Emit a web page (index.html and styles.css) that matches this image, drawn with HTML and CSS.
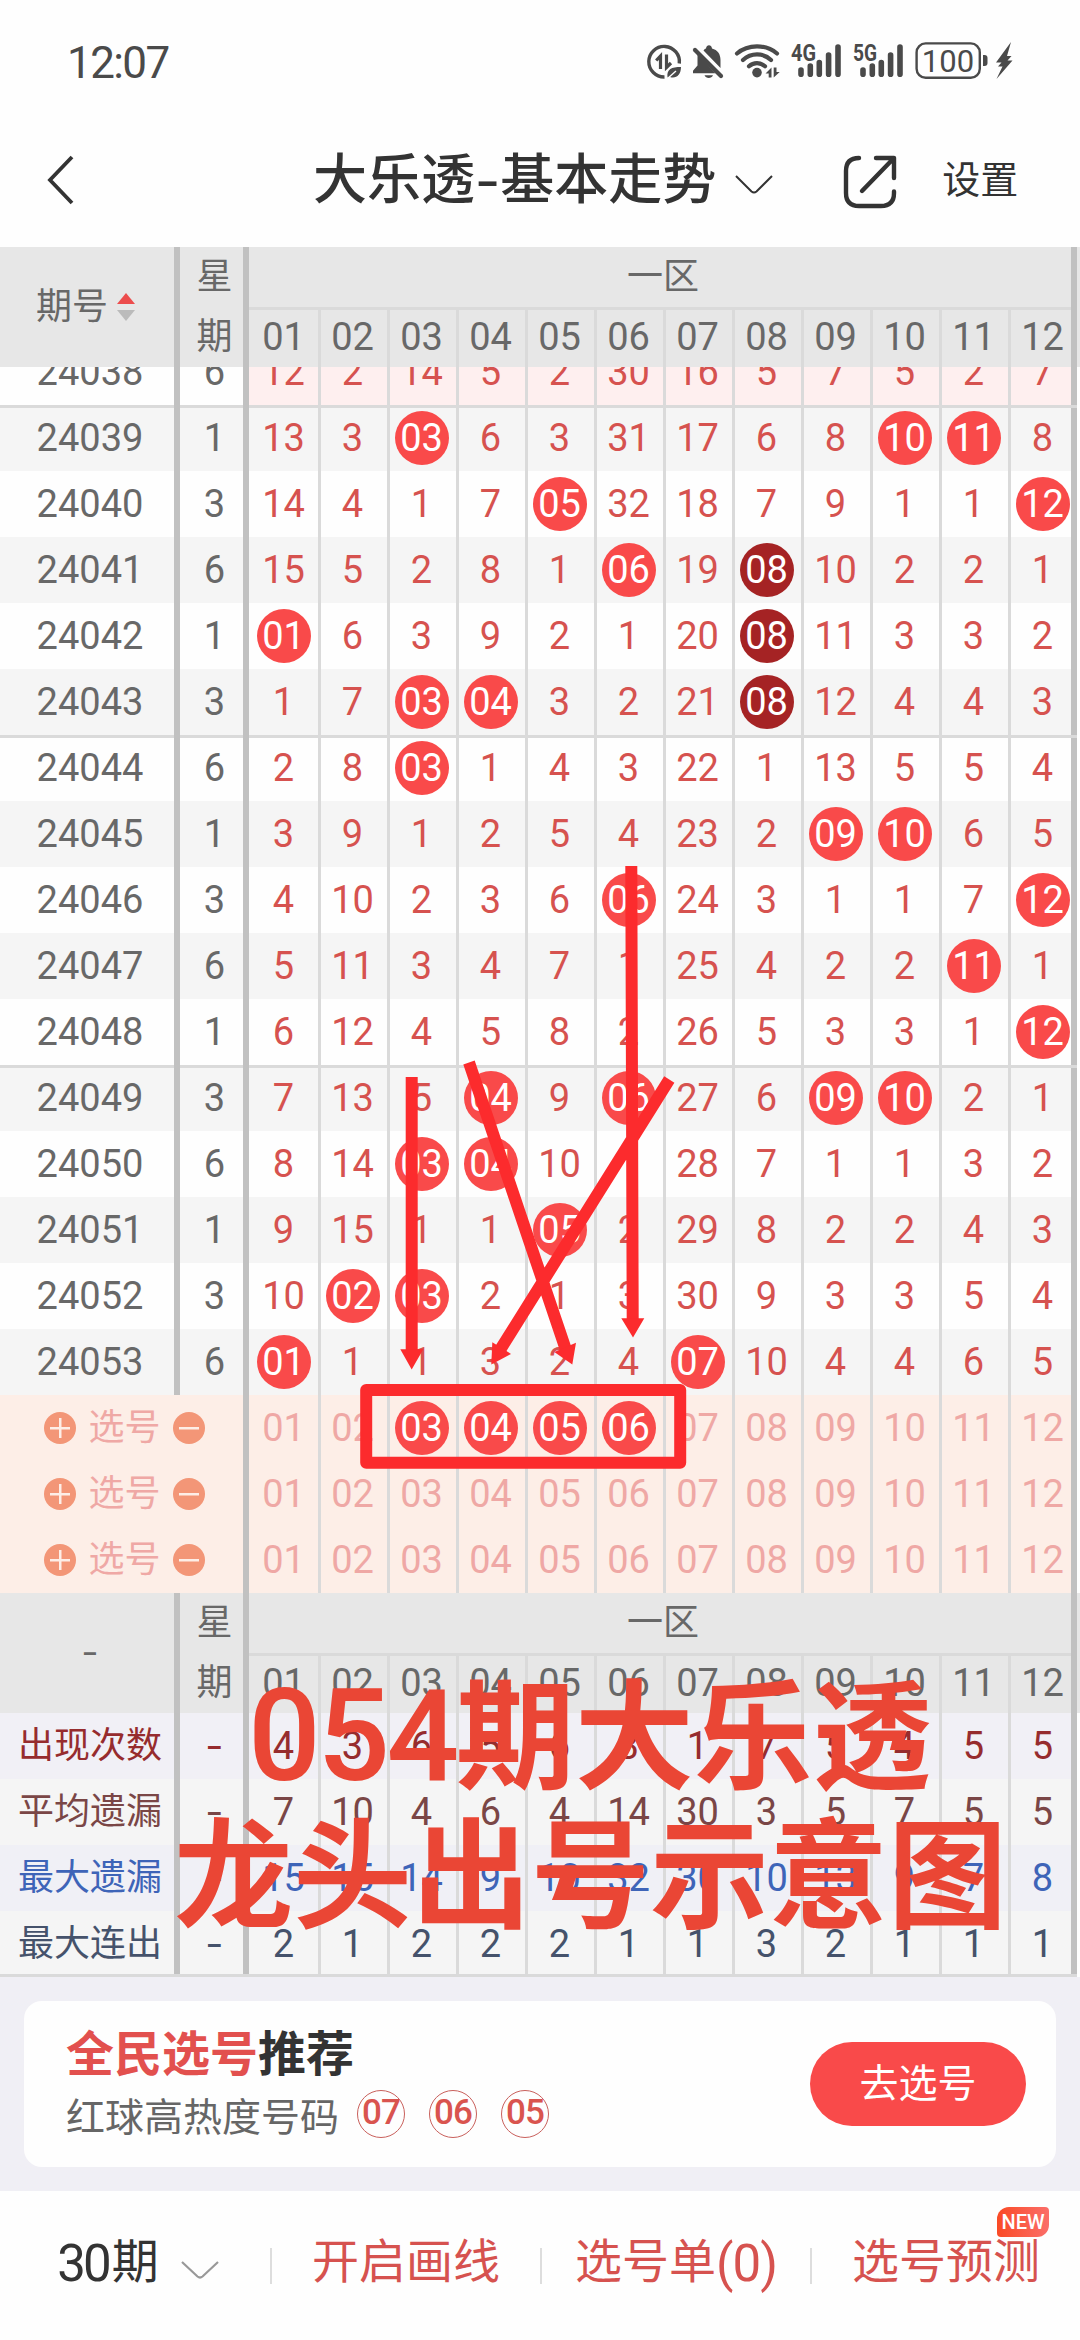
FILE: index.html
```html
<!DOCTYPE html>
<html lang="zh-CN">
<head>
<meta charset="utf-8">
<title>大乐透-基本走势</title>
<link rel="stylesheet" href="styles.css">
</head>
<body>
<header class="status">
  <span class="clock">12:07</span>
  <svg class="status-icons" width="370" height="44" viewBox="645 40 370 44">
    <g fill="none" stroke="#4a4a4a" stroke-width="3.4">
      <path d="M679.300 63.500a15.300 15.300 0 1 0-14.800 13.500"/>
      <path d="M656.200 60.500l4.300-4.500v13M666.500 54.500v13l4.500-4.500" stroke-width="3.200"/>
    </g>
    <path d="M667.500 77.500c-1-8.500 4-10.500 13.500-10.500c0 8-5 12-11 10z" fill="#4a4a4a"/>
    <path d="M667.500 78.500l8.500-7.500" stroke="#fefefe" stroke-width="1.400"/>
    <g fill="#4a4a4a">
      <path d="M697.500 54l18 19.300h-22.500v-2.600l4.500-5.200zM703.500 50.500c1-1.300 1.500-1.700 2.500-2c.5-4.400 5.500-4.400 6 0c5.500 1.500 8.500 5.500 8.500 11.500v8zM704.500 75.300h8.500c-1.500 3.500-7 3.500-8.500 0z"/>
      <path d="M695 50l26 26" stroke="#4a4a4a" stroke-width="4.200" stroke-linecap="round"/>
      <circle cx="757" cy="72.600" r="4.800"/>
      <path d="M771.500 67.500v10h-2.800v-4h-3.200zM773.700 77.500v-10h2.800v4.500h3.200z"/>
    </g>
    <g fill="none" stroke="#4a4a4a" stroke-width="4.200" stroke-linecap="round">
      <path d="M737 53.500c11-9.500 29-9.500 40 0M743 60c8-7.500 20-7.500 28 0M749 66.300c4.500-4.200 11.500-4.200 16 0"/>
    </g>
    <g stroke="#4a4a4a" stroke-width="5.600" stroke-linecap="round">
      <path d="M801 70v4.300M810.300 66v8.300M819.300 62.500v11.800M828.600 55v19.300M838 47v27.300"/>
      <path d="M863 70v4.300M872.300 66v8.300M881.300 62.500v11.800M890.600 55v19.300M900 47v27.300"/>
    </g>
    <g class="net"><text x="791" y="60.500" textLength="25" lengthAdjust="spacingAndGlyphs">4G</text><text x="853" y="60.500" textLength="24" lengthAdjust="spacingAndGlyphs">5G</text></g>
    <rect x="916.600" y="43.400" width="63.200" height="34.400" rx="9" fill="none" stroke="#4a4a4a" stroke-width="2.400"/>
    <text class="batt" x="948" y="72" text-anchor="middle">100</text>
    <path d="M983 55h1.500q3 0 3 3v5q0 3-3 3h-1.500z" fill="#4a4a4a"/>
    <path d="M1011 42l-15 20.500h5.500l-3.500 4h4.500l-6 12.500l16-18.500h-5l4-4.500h-4.500z" fill="#4a4a4a"/>
  </svg>
</header>

<nav class="titlebar">
  <svg class="back" width="30" height="52" viewBox="0 0 30 52"><path d="M27 3L5 26l22 23" fill="none" stroke="#333" stroke-width="3.800"/></svg>
  <h1>大乐透<span class="dash">-</span>基本走势</h1>
  <svg class="down" width="40" height="22" viewBox="0 0 40 22"><path d="M2 2l15.500 15.500q2.500 2 5 0L38 2" fill="none" stroke="#333" stroke-width="2"/></svg>
  <svg class="share" width="56" height="56" viewBox="0 0 56 56"><path d="M17 4q-13 0-13 13v22q0 13 13 13h22q13 0 13-13v-1.500M34 4h18v20M52 4L20 37" fill="none" stroke="#333" stroke-width="4.400" stroke-linecap="round" stroke-linejoin="round"/></svg>
  <span class="settings">设置</span>
</nav>

<main class="chart">
<table class="grid head">
<colgroup><col class="c-issue"><col class="c-day" span="13"><col></colgroup>
<tr><td rowspan="2"><span class="sort">期号<svg width="18" height="28" viewBox="0 0 18 28"><path d="M9 0l9 11H0z" fill="#ec4d4d"/><path d="M0 17h18l-9 11z" fill="#bbb"/></svg></span><td>星<td class="zone" colspan="12">一区
<tr><td>期<td>01<td>02<td>03<td>04<td>05<td>06<td>07<td>08<td>09<td>10<td>11<td>12
</table>

<div class="scroll">
<table class="grid data">
<colgroup><col class="c-issue"><col class="c-day" span="13"><col></colgroup>
<tr class="pink"><td>24038<td>6<td>12<td>2<td>14<td>5<td>2<td>30<td>16<td>5<td>7<td>5<td>2<td>7
<tr class="sep alt"><td>24039<td>1<td>13<td>3<td><b>03</b><td>6<td>3<td>31<td>17<td>6<td>8<td><b>10</b><td><b>11</b><td>8
<tr><td>24040<td>3<td>14<td>4<td>1<td>7<td><b>05</b><td>32<td>18<td>7<td>9<td>1<td>1<td><b>12</b>
<tr class="alt"><td>24041<td>6<td>15<td>5<td>2<td>8<td>1<td><b>06</b><td>19<td><b class="hot">08</b><td>10<td>2<td>2<td>1
<tr><td>24042<td>1<td><b>01</b><td>6<td>3<td>9<td>2<td>1<td>20<td><b class="hot">08</b><td>11<td>3<td>3<td>2
<tr class="alt"><td>24043<td>3<td>1<td>7<td><b>03</b><td><b>04</b><td>3<td>2<td>21<td><b class="hot">08</b><td>12<td>4<td>4<td>3
<tr class="sep"><td>24044<td>6<td>2<td>8<td><b>03</b><td>1<td>4<td>3<td>22<td>1<td>13<td>5<td>5<td>4
<tr class="alt"><td>24045<td>1<td>3<td>9<td>1<td>2<td>5<td>4<td>23<td>2<td><b>09</b><td><b>10</b><td>6<td>5
<tr><td>24046<td>3<td>4<td>10<td>2<td>3<td>6<td><b>06</b><td>24<td>3<td>1<td>1<td>7<td><b>12</b>
<tr class="alt"><td>24047<td>6<td>5<td>11<td>3<td>4<td>7<td>1<td>25<td>4<td>2<td>2<td><b>11</b><td>1
<tr><td>24048<td>1<td>6<td>12<td>4<td>5<td>8<td>2<td>26<td>5<td>3<td>3<td>1<td><b>12</b>
<tr class="sep alt"><td>24049<td>3<td>7<td>13<td>5<td><b>04</b><td>9<td><b>06</b><td>27<td>6<td><b>09</b><td><b>10</b><td>2<td>1
<tr><td>24050<td>6<td>8<td>14<td><b>03</b><td><b>04</b><td>10<td>1<td>28<td>7<td>1<td>1<td>3<td>2
<tr class="alt"><td>24051<td>1<td>9<td>15<td>1<td>1<td><b>05</b><td>2<td>29<td>8<td>2<td>2<td>4<td>3
<tr><td>24052<td>3<td>10<td><b>02</b><td><b>03</b><td>2<td>1<td>3<td>30<td>9<td>3<td>3<td>5<td>4
<tr class="alt"><td>24053<td>6<td><b>01</b><td>1<td>1<td>3<td>2<td>4<td><b>07</b><td>10<td>4<td>4<td>6<td>5
</table>

<table class="grid pick">
<colgroup><col class="c-issue"><col class="c-day" span="13"><col></colgroup>
<tr><td colspan="2"><span class="picker"><i class="plus"></i>选号<i></i></span><td>01<td>02<td><b>03</b><td><b>04</b><td><b>05</b><td><b>06</b><td>07<td>08<td>09<td>10<td>11<td>12
<tr><td colspan="2"><span class="picker"><i class="plus"></i>选号<i></i></span><td>01<td>02<td>03<td>04<td>05<td>06<td>07<td>08<td>09<td>10<td>11<td>12
<tr><td colspan="2"><span class="picker"><i class="plus"></i>选号<i></i></span><td>01<td>02<td>03<td>04<td>05<td>06<td>07<td>08<td>09<td>10<td>11<td>12
</table>
</div>

<table class="grid head">
<colgroup><col class="c-issue"><col class="c-day" span="13"><col></colgroup>
<tr><td rowspan="2"><span class="none">-</span><td>星<td class="zone" colspan="12">一区
<tr><td>期<td>01<td>02<td>03<td>04<td>05<td>06<td>07<td>08<td>09<td>10<td>11<td>12
</table>

<table class="grid stats">
<colgroup><col class="c-issue"><col class="c-day" span="13"><col></colgroup>
<tr class="times"><td>出现次数<td><span class="none">-</span><td>4<td>3<td>6<td>5<td>6<td>3<td>1<td>7<td>5<td>4<td>5<td>5
<tr class="avg"><td>平均遗漏<td><span class="none">-</span><td>7<td>10<td>4<td>6<td>4<td>14<td>30<td>3<td>5<td>7<td>5<td>5
<tr class="max"><td>最大遗漏<td><span class="none">-</span><td>15<td>15<td>14<td>9<td>10<td>32<td>30<td>10<td>13<td>9<td>7<td>8
<tr class="run"><td>最大连出<td><span class="none">-</span><td>2<td>1<td>2<td>2<td>2<td>1<td>1<td>3<td>2<td>1<td>1<td>1
</table>

<svg class="marks" width="1080" height="1730" viewBox="0 247 1080 1730">
  <g fill="none" stroke="#fc2b2d" stroke-width="12">
    <path d="M411.700 1077V1352M469 1062.500L566 1350M669.300 1079.500L500 1350M631.300 866L632.700 1320"/>
    <rect x="366.200" y="1390" width="314" height="72.700" stroke-linejoin="round"/>
  </g>
  <path d="M400.300 1349.300h23L411.700 1369.500zM554.300 1352L576 1342.700L572.300 1364.500zM492.300 1342.300L511 1354L491.300 1364.500zM621.300 1318.300h23L633 1337.500z" fill="#fc2b2d"/>
</svg>
<div class="caption"><p><span class="num">054</span>期大乐透</p><p>龙头出号示意图</p></div>
</main>

<section class="promo">
  <div class="card">
    <div>
      <h2><em>全民选号</em>推荐</h2>
      <p>红球高热度号码<b>07</b><b>06</b><b>05</b></p>
    </div>
    <button>去选号</button>
  </div>
</section>

<footer class="tabs">
  <div class="period"><span class="num">30</span>期<svg width="40" height="20" viewBox="0 0 40 20"><path d="M2 2l15.500 14.500q2.500 2 5 0L38 2" fill="none" stroke="#999" stroke-width="2.200"/></svg></div>
  <div>开启画线</div>
  <div>选号单<span class="num">(0)</span></div>
  <div>选号预测<span class="new">NEW</span></div>
</footer>
</body>
</html>
```
FILE: styles.css
```css
* { box-sizing: border-box; margin: 0; padding: 0; }
body {
  width: 1080px;
  height: 2340px;
  overflow: hidden;
  background: #fefefe;
  color: #333;
  font-family: Roboto, "Noto Sans CJK SC", sans-serif;
}

/* status bar */
.status {
  height: 124px;
  padding: 0 65px 0 67px;
  display: flex;
  align-items: center;
  justify-content: space-between;
  color: #4a4a4a;
}
.clock { font-size: 44px; letter-spacing: -1.6px; line-height: 44px; padding-top: 2px; }
.net { font: 700 23px Roboto, sans-serif; fill: #4a4a4a; }
.batt { font: 400 31px Roboto, sans-serif; fill: #4a4a4a; }

/* title bar */
.titlebar {
  height: 123px;
  padding: 0 50px 12px 45px;
  display: flex;
  align-items: center;
}
.titlebar h1 {
  margin: -8px 0 0 238px;
  font: 500 54px/60px "Noto Sans CJK SC", sans-serif;
  white-space: nowrap;
}
.dash { display: inline-block; margin: 0 3px; transform: scaleX(1.25); }
.down { flex: none; margin: 10px 0 0 18px; }
.share { flex: none; margin: 4px 0 0 68px; }
.settings { margin-left: 44px; font-size: 38px; line-height: 60px; white-space: nowrap; }

/* trend tables */
.chart { position: relative; height: 1730px; }
.grid {
  width: 1080px;
  table-layout: fixed;
  border-collapse: collapse;
  font-size: 38px;
  line-height: 54px;
  color: #686868;
}
.c-issue { width: 180px; }
.c-day { width: 69px; }
.grid td {
  height: 66px;
  text-align: center;
  vertical-align: middle;
  white-space: nowrap;
  box-shadow: inset 3px 0 #dadada;
}
.grid td:first-child, .grid td:nth-child(2) { box-shadow: inset -6px 0 #c1c1c1; }
.grid td:nth-child(3) { box-shadow: none; }
.grid td:last-child { box-shadow: inset -6px 0 #c1c1c1, inset 3px 0 #dadada; }

.head, .head tr { background: #e7e7e7; }
.grid.head td { height: 60px; }
.head tr:first-child td { font-size: 36px; }
.head tr:nth-child(2) td { box-shadow: inset 0 3px #dadada, inset 3px 0 #dadada; }
.head tr:nth-child(2) td:first-child { box-shadow: inset -6px 0 #c1c1c1; font-size: 36px; }
.head tr:nth-child(2) td:nth-child(2) { box-shadow: inset 0 3px #dadada; }
.head tr:nth-child(2) td:last-child { box-shadow: inset -6px 0 #c1c1c1, inset 0 3px #dadada, inset 3px 0 #dadada; }
.head td.zone:last-child { box-shadow: inset -6px 0 #c1c1c1; }
.sort { display: flex; align-items: center; gap: 9px; padding-left: 36px; }
.none { display: inline-block; transform: scaleX(1.4); }

.scroll { height: 1226px; overflow: hidden; }
.data { margin-top: -28px; }
.data td { color: #d6524f; }
.data td:first-child, .data td:nth-child(2) { color: #686868; }
.data .alt { background: #f5f5f5; }
.pink td:nth-child(n+3) { background: #feefef; }
.data .sep td:first-child, .data .sep td:nth-child(2) { box-shadow: inset -6px 0 #c1c1c1, inset 0 3px #dadada; }
.data .sep td:nth-child(3) { box-shadow: inset 0 3px #dadada; }
.data .sep td:nth-child(n+4) { box-shadow: inset 0 3px #dadada, inset 3px 0 #dadada; }
.data .sep td:last-child { box-shadow: inset 0 3px #dadada, inset -6px 0 #c1c1c1, inset 3px 0 #dadada; }
.grid b {
  display: block;
  width: 54px;
  height: 54px;
  margin: 0 auto;
  border-radius: 50%;
  background: #f94a4a;
  color: #fff;
  font-weight: 400;
}
.grid b.hot { background: #a52324; }

.pick tr { background: #fdeee7; }
.pick td { color: #efa8a5; }
.grid.pick td:nth-child(2) { box-shadow: none; }
.grid.pick td:nth-child(3) { box-shadow: inset 3px 0 #dadada; }
.picker { display: flex; align-items: center; gap: 12.500px; padding-left: 44px; font-size: 36px; }
.picker i {
  width: 32px;
  height: 32px;
  border-radius: 50%;
  background: linear-gradient(#fdeee7, #fdeee7) center / 20px 2.500px no-repeat, #f39677;
}
.picker .plus {
  background: linear-gradient(#fdeee7, #fdeee7) center / 20px 2.500px no-repeat, linear-gradient(#fdeee7, #fdeee7) center / 2.500px 20px no-repeat, #f39677;
}

.stats tr { background: #f5f5f5; }
.stats td:first-child { font-size: 36px; }
.stats .times { background: #f1f0f6; color: #962c2e; }
.stats .avg { color: #7a4646; }
.stats .max { background: #f0f0f6; color: #3e64b8; }
.stats .run { color: #45526b; }
.stats .run td:nth-child(n) { box-shadow: inset 0 -3px #dadada, inset 3px 0 #dadada; }
.stats .run td:nth-child(-n+2) { box-shadow: inset 0 -3px #dadada, inset -6px 0 #c1c1c1; }
.stats .run td:nth-child(3) { box-shadow: inset 0 -3px #dadada; }
.stats .run td:last-child { box-shadow: inset 0 -3px #dadada, inset -6px 0 #c1c1c1, inset 3px 0 #dadada; }

/* hand-drawn annotations lying over the chart */
.marks { position: absolute; left: 0; top: 0; }
.caption {
  position: absolute;
  left: 174px;
  top: 1412px;
  width: 833px;
  color: #ea4635;
  font: 700 119px/139px "Noto Sans CJK SC", sans-serif;
}
.caption p { white-space: nowrap; }
.caption p:first-child { padding-left: 74px; }
.caption .num { font: 500 128px/100px Roboto, sans-serif; letter-spacing: -3.500px; }

/* recommendation card */
.promo { height: 214px; padding: 24px; background: #f0eff5; }
.card {
  height: 166px;
  padding: 0 30px 0 42px;
  border-radius: 18px;
  background: #fefefe;
  display: flex;
  align-items: center;
  justify-content: space-between;
}
.card h2 { margin-top: -5px; font: 700 48px/56px "Noto Sans CJK SC", sans-serif; }
.card em { font-style: normal; color: #e2504e; }
.card p { display: flex; align-items: center; height: 56px; margin-top: 8px; font-size: 39px; color: #666; }
.card p b {
  width: 48px;
  height: 48px;
  margin-left: 24px;
  border: 1.500px solid #c9605c;
  border-radius: 50%;
  color: #d9544f;
  font-size: 35px;
  font-weight: 500;
  line-height: 44px;
  letter-spacing: -1px;
  text-align: center;
}
.card p b:first-of-type { margin-left: 18px; }
.card button {
  width: 216px;
  height: 84px;
  padding-bottom: 9px;
  border: 0;
  border-radius: 42px;
  background: #f94a4a;
  color: #fff;
  font: 400 39px "Noto Sans CJK SC", sans-serif;
}

/* bottom actions */
.tabs {
  height: 149px;
  display: grid;
  grid-template-columns: repeat(4, 270px);
  align-items: center;
  font-size: 47px;
  line-height: 56px;
  color: #d6524f;
}
.tabs div {
  position: relative;
  height: 36px;
  padding-bottom: 7px;
  display: flex;
  align-items: center;
  justify-content: center;
  white-space: nowrap;
  border-left: 2px solid #ddd;
}
.tabs .num { padding-top: 3px; font-size: 51px; letter-spacing: -1px; }
.tabs .period { border-left: 0; padding-left: 7px; color: #333; }
.tabs .period .num { letter-spacing: -3px; margin-right: 3px; }
.period svg { margin: 16px 0 0 21px; }
.tabs .new {
  position: absolute;
  right: 31px;
  top: -41px;
  width: 52px;
  height: 30px;
  border-radius: 12px 4px 12px 4px;
  background: linear-gradient(90deg, #fa4a25, #fb6e69);
  color: #fff;
  font: 500 20px/31px Roboto, sans-serif;
  text-align: center;
}
```
